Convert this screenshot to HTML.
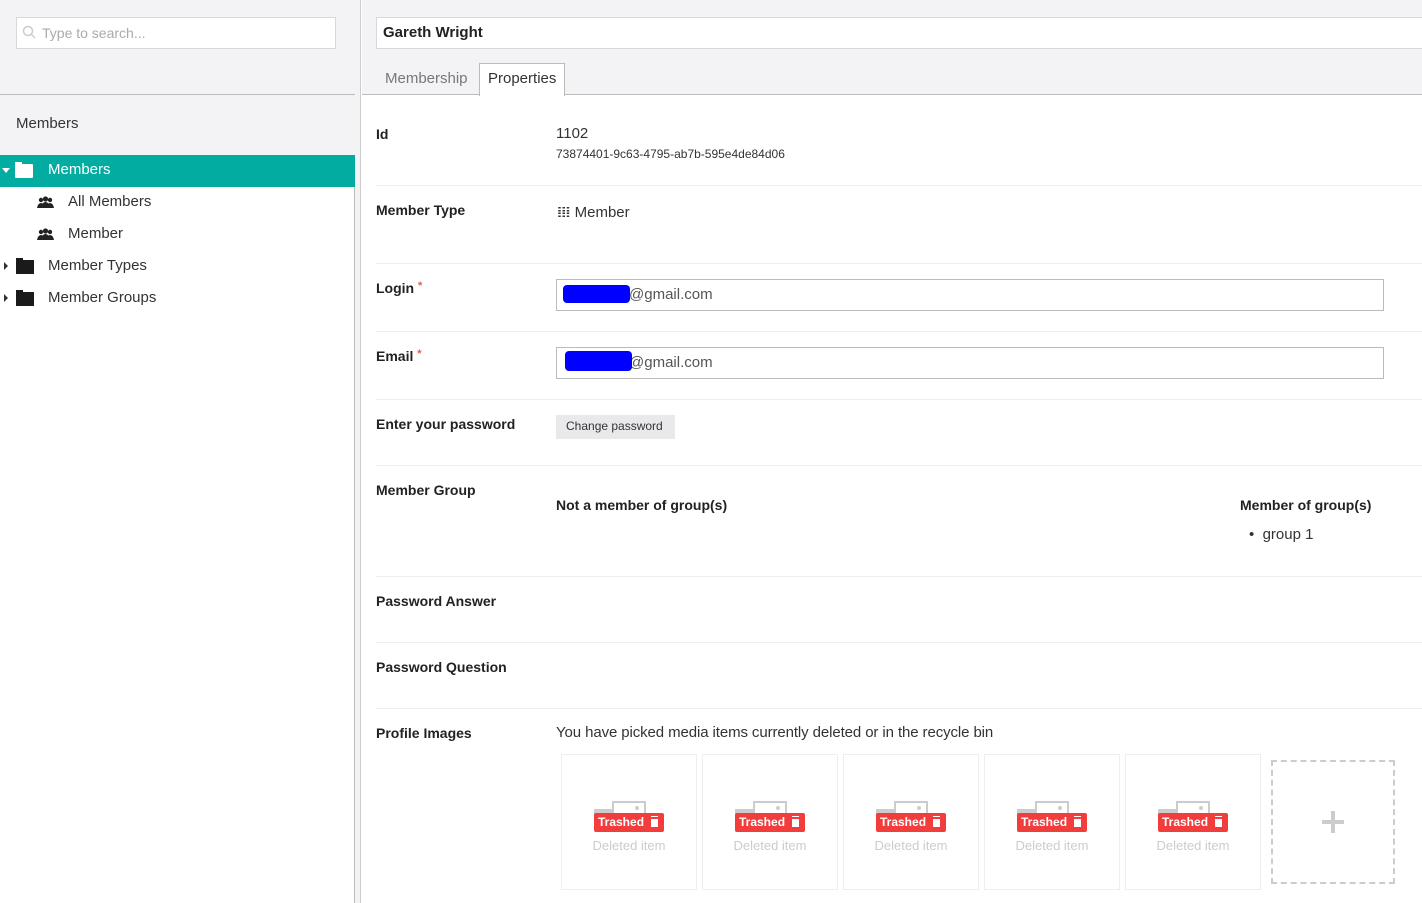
<!DOCTYPE html>
<html><head><style>
*{box-sizing:border-box;margin:0;padding:0}
body{width:1422px;height:903px;overflow:hidden;font-family:"Liberation Sans",sans-serif;color:#1b264f;background:#fff;position:relative}
.abs{position:absolute}
.side{left:0;top:0;width:355px;height:903px;background:#fff;border-right:1px solid #bbb}
.sidetop{left:0;top:0;width:355px;height:95px;background:#f3f3f5;border-bottom:1px solid #bbb}
.search{left:16px;top:17px;width:320px;height:32px;background:#fff;border:1px solid #d8d7d9;font-size:14px;color:#aaa;padding:7px 0 0 25px}
.tree{font-size:15px;color:#333}
.lbl{font-weight:bold;color:#222;font-size:14px}
.row{position:absolute;left:376px;width:1046px;border-top:1px solid #eee}
.val{font-size:15px;color:#333}
.inp{position:absolute;left:556px;width:828px;height:32px;border:1px solid #bbb;font-size:15px;color:#555;padding:6px 0 0 72px}
.card{position:absolute;top:754px;width:136px;height:136px;border:1px solid #eee}
.card .img{position:absolute;left:32px;top:46px;width:52px;height:22px}
.tr{position:absolute;left:32px;top:58px;width:70px;height:19px;background:#f23d3d;color:#fff;font-weight:bold;font-size:12px;border-radius:2px;padding:2px 0 0 4px;white-space:nowrap}
.tr i{position:absolute;right:6px;top:4px;width:7px;height:10px;background:#fff;border-top:2px solid #f23d3d;box-shadow:0 -1px 0 #fff}
.di{position:absolute;left:0;width:134px;top:83px;text-align:center;color:#ccc;font-size:13px}
</style></head><body>
<div class="abs side"></div>
<div class="abs sidetop"></div>
<div class="abs" style="left:355px;top:0;width:6px;height:903px;background:#f3f3f5;border-right:1px solid #ccc"></div>
<div class="abs search">Type to search...</div>
<svg class="abs" style="left:22px;top:25px" width="14" height="14"><circle cx="6" cy="6" r="4.5" fill="none" stroke="#ccc" stroke-width="1.5"/><line x1="9" y1="9" x2="13" y2="13" stroke="#ccc" stroke-width="1.5"/></svg>
<div class="abs" style="left:0;top:95px;width:355px;height:60px;background:#f3f3f5"></div>
<div class="abs" style="left:16px;top:115px;font-size:15px;color:#333">Members</div>
<div class="abs" style="left:0;top:155px;width:355px;height:32px;background:#03aca0"></div>
<div class="abs" style="left:2px;top:168px;width:0;height:0;border-left:4px solid transparent;border-right:4px solid transparent;border-top:5px solid #fff"></div>
<div class="abs" style="left:15px;top:162px;width:7px;height:3px;background:#fff"></div>
<div class="abs" style="left:15px;top:164px;width:18px;height:14px;background:#fff;border-radius:1px"></div>
<div class="abs" style="left:48px;top:161px;font-size:15px;color:#fff">Members</div>
<svg class="abs" style="left:37px;top:196px" width="17" height="13" viewBox="0 0 17 13"><circle cx="4" cy="4" r="2.2" fill="#222"/><circle cx="13" cy="4" r="2.2" fill="#222"/><circle cx="8.5" cy="3" r="2.6" fill="#222"/><path d="M0 12 Q1 7 4 7 Q7 7 8 12Z M9 12 Q10 7 13 7 Q16 7 17 12Z M4 12 Q5 6 8.5 6 Q12 6 13 12Z" fill="#222"/></svg>
<div class="abs tree" style="left:68px;top:193px">All Members</div>
<svg class="abs" style="left:37px;top:228px" width="17" height="13" viewBox="0 0 17 13"><circle cx="4" cy="4" r="2.2" fill="#222"/><circle cx="13" cy="4" r="2.2" fill="#222"/><circle cx="8.5" cy="3" r="2.6" fill="#222"/><path d="M0 12 Q1 7 4 7 Q7 7 8 12Z M9 12 Q10 7 13 7 Q16 7 17 12Z M4 12 Q5 6 8.5 6 Q12 6 13 12Z" fill="#222"/></svg>
<div class="abs tree" style="left:68px;top:225px">Member</div>
<div class="abs" style="left:4px;top:262px;border-top:4px solid transparent;border-bottom:4px solid transparent;border-left:4px solid #333"></div>
<div class="abs" style="left:16px;top:258px;width:7px;height:3px;background:#1a1a1a"></div>
<div class="abs" style="left:16px;top:260px;width:18px;height:14px;background:#1a1a1a"></div>
<div class="abs tree" style="left:48px;top:257px">Member Types</div>
<div class="abs" style="left:4px;top:294px;border-top:4px solid transparent;border-bottom:4px solid transparent;border-left:4px solid #333"></div>
<div class="abs" style="left:16px;top:290px;width:7px;height:3px;background:#1a1a1a"></div>
<div class="abs" style="left:16px;top:292px;width:18px;height:14px;background:#1a1a1a"></div>
<div class="abs tree" style="left:48px;top:289px">Member Groups</div>

<div class="abs" style="left:362px;top:0;width:1060px;height:95px;background:#f3f3f5;border-bottom:1px solid #bbb"></div>
<div class="abs" style="left:376px;top:17px;width:1050px;height:32px;background:#fff;border:1px solid #d8d7d9;font-size:15px;font-weight:bold;color:#222;padding:6px 0 0 6px">Gareth Wright</div>
<div class="abs" style="left:385px;top:70px;font-size:15px;color:#777">Membership</div>
<div class="abs" style="left:479px;top:63px;width:86px;height:33px;background:#fff;border:1px solid #bbb;border-bottom:none;font-size:15px;color:#333;padding:6px 0 0 8px">Properties</div>

<div class="abs lbl" style="left:376px;top:126px">Id</div>
<div class="abs val" style="left:556px;top:125px">1102</div>
<div class="abs" style="left:556px;top:147px;font-size:12px;color:#333">73874401-9c63-4795-ab7b-595e4de84d06</div>
<div class="row" style="top:185px"></div>
<div class="abs lbl" style="left:376px;top:202px">Member Type</div>
<div class="abs val" style="left:557px;top:203px">𝍖 Member</div>
<div class="row" style="top:263px"></div>
<div class="abs lbl" style="left:376px;top:280px">Login <span style="color:#e55;font-size:11px;vertical-align:top">*</span></div>
<div class="inp" style="top:279px">@gmail.com</div>
<div class="abs" style="left:563px;top:285px;width:67px;height:18px;background:#00f;border-radius:4px"></div>
<div class="row" style="top:331px"></div>
<div class="abs lbl" style="left:376px;top:348px">Email <span style="color:#e55;font-size:11px;vertical-align:top">*</span></div>
<div class="inp" style="top:347px">@gmail.com</div>
<div class="abs" style="left:565px;top:351px;width:67px;height:20px;background:#00f;border-radius:4px"></div>
<div class="row" style="top:399px"></div>
<div class="abs lbl" style="left:376px;top:416px">Enter your password</div>
<div class="abs" style="left:556px;top:415px;width:119px;height:24px;background:#e9e9eb;font-size:12px;color:#333;padding:4px 0 0 10px">Change password</div>
<div class="row" style="top:465px"></div>
<div class="abs lbl" style="left:376px;top:482px">Member Group</div>
<div class="abs lbl" style="left:556px;top:497px">Not a member of group(s)</div>
<div class="abs lbl" style="left:1240px;top:497px">Member of group(s)</div>
<div class="abs val" style="left:1249px;top:526px">•&nbsp; group 1</div>
<div class="row" style="top:576px"></div>
<div class="abs lbl" style="left:376px;top:593px">Password Answer</div>
<div class="row" style="top:642px"></div>
<div class="abs lbl" style="left:376px;top:659px">Password Question</div>
<div class="row" style="top:708px"></div>
<div class="abs lbl" style="left:376px;top:725px">Profile Images</div>
<div class="abs val" style="left:556px;top:724px;letter-spacing:-0.1px">You have picked media items currently deleted or in the recycle bin</div>

<div class="card" style="left:561px"><svg class="img" viewBox="0 0 52 22"><rect x="0" y="8" width="28" height="14" fill="#ccc"/><rect x="19" y="1" width="32" height="20" fill="#fff" stroke="#ccc" stroke-width="2"/><circle cx="43" cy="7" r="2" fill="#ccc"/></svg><div class="tr">Trashed<i></i></div><div class="di">Deleted item</div></div>
<div class="card" style="left:702px"><svg class="img" viewBox="0 0 52 22"><rect x="0" y="8" width="28" height="14" fill="#ccc"/><rect x="19" y="1" width="32" height="20" fill="#fff" stroke="#ccc" stroke-width="2"/><circle cx="43" cy="7" r="2" fill="#ccc"/></svg><div class="tr">Trashed<i></i></div><div class="di">Deleted item</div></div>
<div class="card" style="left:843px"><svg class="img" viewBox="0 0 52 22"><rect x="0" y="8" width="28" height="14" fill="#ccc"/><rect x="19" y="1" width="32" height="20" fill="#fff" stroke="#ccc" stroke-width="2"/><circle cx="43" cy="7" r="2" fill="#ccc"/></svg><div class="tr">Trashed<i></i></div><div class="di">Deleted item</div></div>
<div class="card" style="left:984px"><svg class="img" viewBox="0 0 52 22"><rect x="0" y="8" width="28" height="14" fill="#ccc"/><rect x="19" y="1" width="32" height="20" fill="#fff" stroke="#ccc" stroke-width="2"/><circle cx="43" cy="7" r="2" fill="#ccc"/></svg><div class="tr">Trashed<i></i></div><div class="di">Deleted item</div></div>
<div class="card" style="left:1125px"><svg class="img" viewBox="0 0 52 22"><rect x="0" y="8" width="28" height="14" fill="#ccc"/><rect x="19" y="1" width="32" height="20" fill="#fff" stroke="#ccc" stroke-width="2"/><circle cx="43" cy="7" r="2" fill="#ccc"/></svg><div class="tr">Trashed<i></i></div><div class="di">Deleted item</div></div>
<div class="abs" style="left:1271px;top:760px;width:124px;height:124px;border:2px dashed #ccc"></div>
<div class="abs" style="left:1322px;top:820px;width:22px;height:4px;background:#ccc"></div>
<div class="abs" style="left:1331px;top:811px;width:4px;height:22px;background:#ccc"></div>
</body></html>
